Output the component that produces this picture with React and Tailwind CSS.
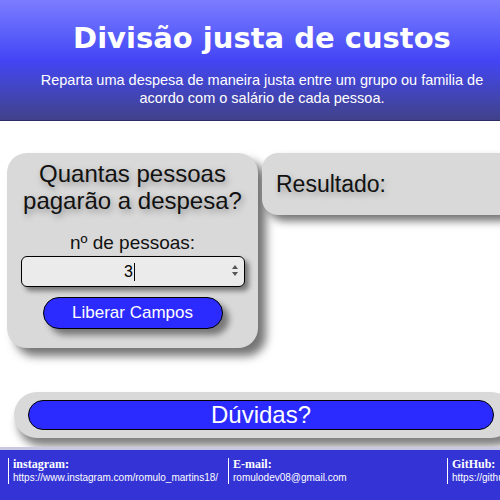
const App = () => {
  return (
    <div className="w-[500px] h-[500px] overflow-hidden bg-white flex flex-col font-['Liberation_Sans',Arial,sans-serif]">
      <header className="h-[121px] shrink-0 bg-linear-to-b from-[#7c7cff] via-[#4444f5] to-[#41418a] border-b border-[#2c2c66] flex flex-col items-center pl-[24px]">
        <h1 className="mt-[19px] text-white font-bold text-[29px] leading-[38px] font-['DejaVu_Sans',Verdana,sans-serif]">
          Divisão justa de custos
        </h1>
        <p className="mt-[14px] w-[470px] text-center text-white text-[14.5px] leading-[18px]">
          Reparta uma despesa de maneira justa entre um grupo ou familia de acordo com o salário de cada pessoa.
        </p>
      </header>

      <main className="flex gap-[4px] pl-[7px] pt-[32px] h-[230px] shrink-0">
        <div className="w-[251px] h-[195px] shrink-0 bg-[#d9d9d9] rounded-[20px] shadow-[8px_8px_10px_rgba(0,0,0,0.55)] flex flex-col items-center">
          <h2 className="mt-[7px] text-center text-[24px] leading-[27px] text-[#111] [text-shadow:2px_3px_6px_rgba(0,0,0,0.35)]">
            Quantas pessoas<br />pagarão a despesa?
          </h2>
          <label className="mt-[18px] text-[19px] leading-[22px] text-[#111]">nº de pessoas:</label>
          <div className="mt-[2px] w-[224px] h-[31px] bg-[#ebebeb] border border-black rounded-[6px] shadow-[4px_4px_5px_rgba(0,0,0,0.45)] relative flex items-center justify-center">
            <span className="text-[16px] text-black pr-[6px]">3<span className="inline-block w-px h-[18px] bg-black align-middle ml-px" /></span>
            <span className="absolute right-[6px] top-[8px] flex flex-col items-center gap-[3px]">
              <span className="w-0 h-0 border-l-[3px] border-r-[3px] border-b-[4px] border-l-transparent border-r-transparent border-b-[#555]" />
              <span className="w-0 h-0 border-l-[3px] border-r-[3px] border-t-[4px] border-l-transparent border-r-transparent border-t-[#555]" />
            </span>
          </div>
          <button className="mt-[10px] w-[180px] h-[32px] bg-[#2b2bff] border border-black rounded-full text-white text-[17px] shadow-[6px_6px_6px_rgba(0,0,0,0.45)]">
            Liberar Campos
          </button>
        </div>

        <div className="w-[260px] h-[62px] shrink-0 bg-[#d9d9d9] rounded-[16px] shadow-[6px_6px_8px_rgba(0,0,0,0.55)] flex items-center pl-[14px]">
          <span className="text-[23px] text-[#111] [text-shadow:2px_3px_6px_rgba(0,0,0,0.3)]">Resultado:</span>
        </div>
      </main>

      <section className="pl-[14px] pt-[41px] shrink-0">
        <div className="w-[500px] h-[46px] bg-[#d9d9d9] rounded-full shadow-[4px_8px_8px_rgba(0,0,0,0.5)] flex items-center pl-[14px]">
          <button className="w-[466px] h-[30px] bg-[#2b2bff] border border-black rounded-full text-white text-[24px] leading-[28px]">
            Dúvidas?
          </button>
        </div>
      </section>

      <footer className="mt-[9px] flex-1 bg-[#3434d6] border-t-[3px] border-[#c8c8e0] flex items-start pt-[8px] pl-[8px] text-white">
        <div className="w-[220px] shrink-0 border-l border-white pl-[4px]">
          <div className="font-bold text-[12px] leading-[13px] font-['Liberation_Serif','Times_New_Roman',serif]">instagram:</div>
          <div className="text-[10px] leading-[13px]">https://www.instagram.com/romulo_martins18/</div>
        </div>
        <div className="w-[219px] shrink-0 border-l border-white pl-[4px]">
          <div className="font-bold text-[12px] leading-[13px] font-['Liberation_Serif','Times_New_Roman',serif]">E-mail:</div>
          <div className="text-[10px] leading-[13px]">romulodev08@gmail.com</div>
        </div>
        <div className="w-[200px] shrink-0 border-l border-white pl-[4px]">
          <div className="font-bold text-[12px] leading-[13px] font-['Liberation_Serif','Times_New_Roman',serif]">GitHub:</div>
          <div className="text-[10px] leading-[13px]">https://github.com/</div>
        </div>
      </footer>
    </div>
  );
};

export default App;
